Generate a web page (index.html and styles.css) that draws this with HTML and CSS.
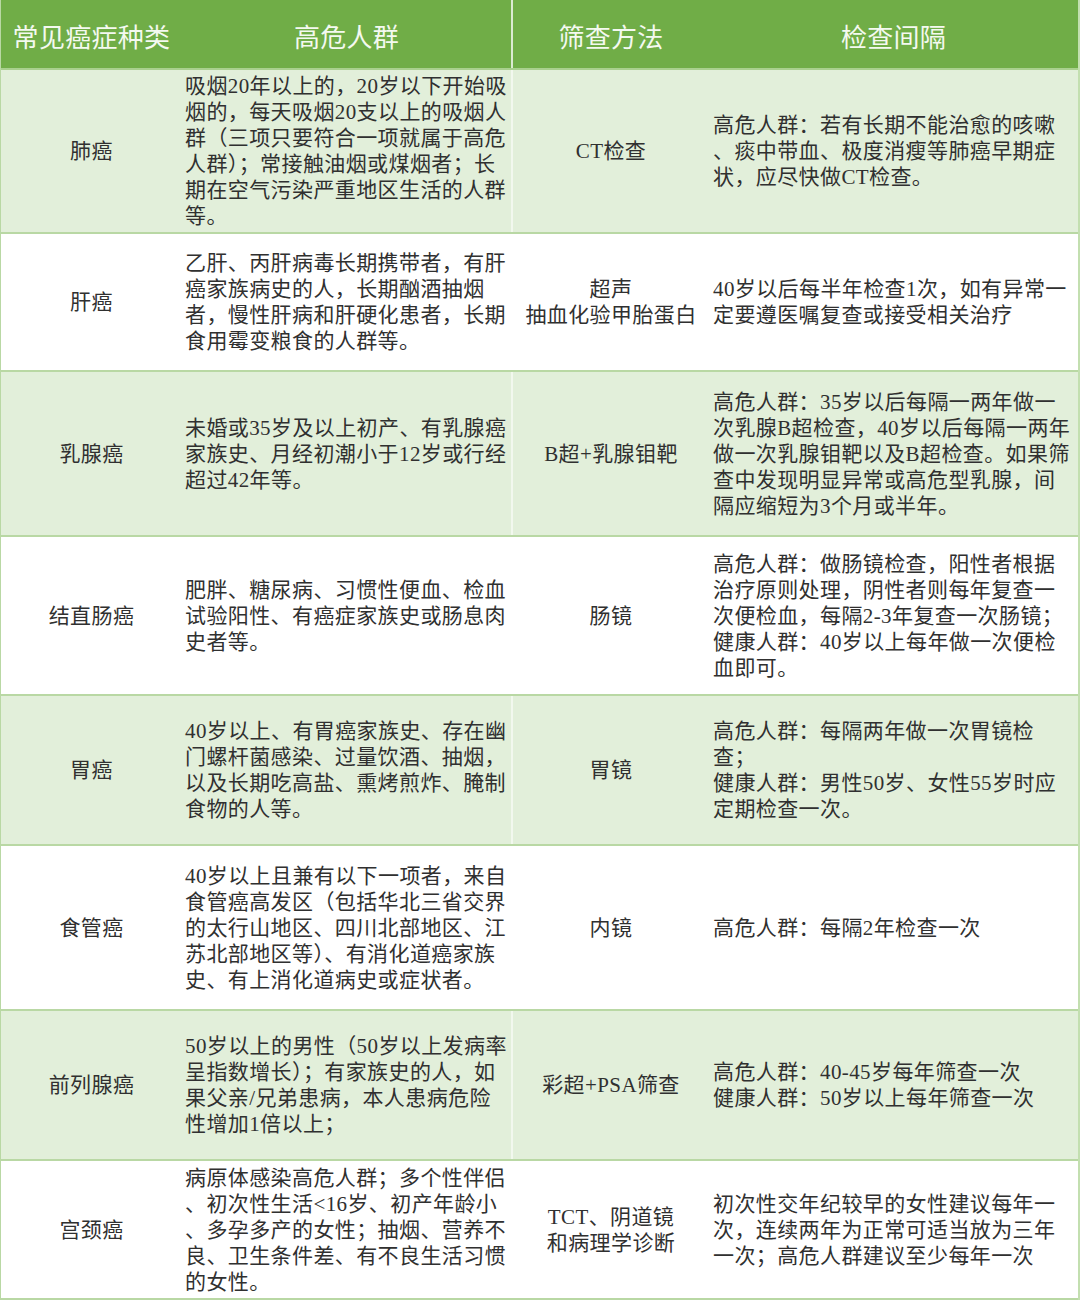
FILE: index.html
```html
<!DOCTYPE html>
<html lang="zh-CN">
<head>
<meta charset="utf-8">
<title>常见癌症筛查</title>
<link rel="stylesheet" href="styles.css">
</head>
<body>
<div class="sheet">
  <div class="row head">
    <div class="cell c1">常见癌症种类</div>
    <div class="cell c2 center">高危人群</div>
    <div class="cell c3">筛查方法</div>
    <div class="cell c4 center">检查间隔</div>
  </div>

  <div class="row tint h1">
    <div class="cell c1">肺癌</div>
    <div class="cell c2">吸烟20年以上的，20岁以下开始吸<br>烟的，每天吸烟20支以上的吸烟人<br>群（三项只要符合一项就属于高危<br>人群）；常接触油烟或煤烟者；长<br>期在空气污染严重地区生活的人群<br>等。</div>
    <div class="cell c3">CT检查</div>
    <div class="cell c4">高危人群：若有长期不能治愈的咳嗽<br>、痰中带血、极度消瘦等肺癌早期症<br>状，应尽快做CT检查。</div>
  </div>

  <div class="row h2">
    <div class="cell c1">肝癌</div>
    <div class="cell c2">乙肝、丙肝病毒长期携带者，有肝<br>癌家族病史的人，长期酗酒抽烟<br>者，慢性肝病和肝硬化患者，长期<br>食用霉变粮食的人群等。</div>
    <div class="cell c3">超声<br>抽血化验甲胎蛋白</div>
    <div class="cell c4">40岁以后每半年检查1次，如有异常一<br>定要遵医嘱复查或接受相关治疗</div>
  </div>

  <div class="row tint h3">
    <div class="cell c1">乳腺癌</div>
    <div class="cell c2">未婚或35岁及以上初产、有乳腺癌<br>家族史、月经初潮小于12岁或行经<br>超过42年等。</div>
    <div class="cell c3">B超+乳腺钼靶</div>
    <div class="cell c4">高危人群：35岁以后每隔一两年做一<br>次乳腺B超检查，40岁以后每隔一两年<br>做一次乳腺钼靶以及B超检查。如果筛<br>查中发现明显异常或高危型乳腺，间<br>隔应缩短为3个月或半年。</div>
  </div>

  <div class="row h4">
    <div class="cell c1">结直肠癌</div>
    <div class="cell c2">肥胖、糖尿病、习惯性便血、检血<br>试验阳性、有癌症家族史或肠息肉<br>史者等。</div>
    <div class="cell c3">肠镜</div>
    <div class="cell c4">高危人群：做肠镜检查，阳性者根据<br>治疗原则处理，阴性者则每年复查一<br>次便检血，每隔2-3年复查一次肠镜；<br>健康人群：40岁以上每年做一次便检<br>血即可。</div>
  </div>

  <div class="row tint h5">
    <div class="cell c1">胃癌</div>
    <div class="cell c2">40岁以上、有胃癌家族史、存在幽<br>门螺杆菌感染、过量饮酒、抽烟，<br>以及长期吃高盐、熏烤煎炸、腌制<br>食物的人等。</div>
    <div class="cell c3">胃镜</div>
    <div class="cell c4">高危人群：每隔两年做一次胃镜检<br>查；<br>健康人群：男性50岁、女性55岁时应<br>定期检查一次。</div>
  </div>

  <div class="row h6">
    <div class="cell c1">食管癌</div>
    <div class="cell c2">40岁以上且兼有以下一项者，来自<br>食管癌高发区（包括华北三省交界<br>的太行山地区、四川北部地区、江<br>苏北部地区等）、有消化道癌家族<br>史、有上消化道病史或症状者。</div>
    <div class="cell c3">内镜</div>
    <div class="cell c4">高危人群：每隔2年检查一次</div>
  </div>

  <div class="row tint h7">
    <div class="cell c1">前列腺癌</div>
    <div class="cell c2">50岁以上的男性（50岁以上发病率<br>呈指数增长）；有家族史的人，如<br>果父亲/兄弟患病，本人患病危险<br>性增加1倍以上；</div>
    <div class="cell c3">彩超+PSA筛查</div>
    <div class="cell c4">高危人群：40-45岁每年筛查一次<br>健康人群：50岁以上每年筛查一次</div>
  </div>

  <div class="row h8">
    <div class="cell c1">宫颈癌</div>
    <div class="cell c2">病原体感染高危人群；多个性伴侣<br>、初次性生活&lt;16岁、初产年龄小<br>、多孕多产的女性；抽烟、营养不<br>良、卫生条件差、有不良生活习惯<br>的女性。</div>
    <div class="cell c3">TCT、阴道镜<br>和病理学诊断</div>
    <div class="cell c4">初次性交年纪较早的女性建议每年一<br>次，连续两年为正常可适当放为三年<br>一次；高危人群建议至少每年一次</div>
  </div>
</div>
</body>
</html>
```

FILE: styles.css
```css
html, body {
  margin: 0;
  padding: 0;
  background: #ffffff;
}

.sheet {
  width: 1080px;
  box-sizing: border-box;
  border-left: 1px solid #b9d8a4;
  border-right: 2px solid #c3dfb0;
  font-family: "Liberation Serif", "Noto Sans CJK SC", serif;
  font-size: 21px;
  line-height: 26px;
  letter-spacing: 0.4px;
  color: #303030;
}

.row {
  display: grid;
  grid-template-columns: 181px 331px 196px 1fr;
  box-sizing: border-box;
  border-bottom: 2px solid #b9d8a4;
  background: #ffffff;
}

.row.tint {
  background: #e2efda;
}

.cell {
  display: flex;
  align-items: center;
  white-space: nowrap;
  box-sizing: border-box;
  min-width: 0;
}

.c1 {
  justify-content: center;
  text-align: center;
}

.c2 {
  padding-left: 3px;
  border-right: 2px solid rgba(255, 255, 255, 0.55);
}

.c3 {
  justify-content: center;
  text-align: center;
}

.c4 {
  padding-left: 4px;
}

.row.head {
  height: 70px;
  background: #70ad47;
  border-bottom: 2px solid #a9d08e;
  color: #f4f9f0;
  font-family: "Noto Sans CJK SC", sans-serif;
  font-size: 26px;
  letter-spacing: 0.3px;
  line-height: 30px;
}

.row.head .cell {
  padding-top: 4px;
  padding-left: 0;
}

.row.head .c2 {
  border-right: 2px solid rgba(255, 255, 255, 0.75);
}

.center {
  justify-content: center;
}

.h1 { height: 164px; }
.h2 { height: 138px; }
.h3 { height: 165px; }
.h4 { height: 159px; }
.h5 { height: 150px; }
.h6 { height: 165px; }
.h7 { height: 150px; }
.h8 { height: 139px; }
```
